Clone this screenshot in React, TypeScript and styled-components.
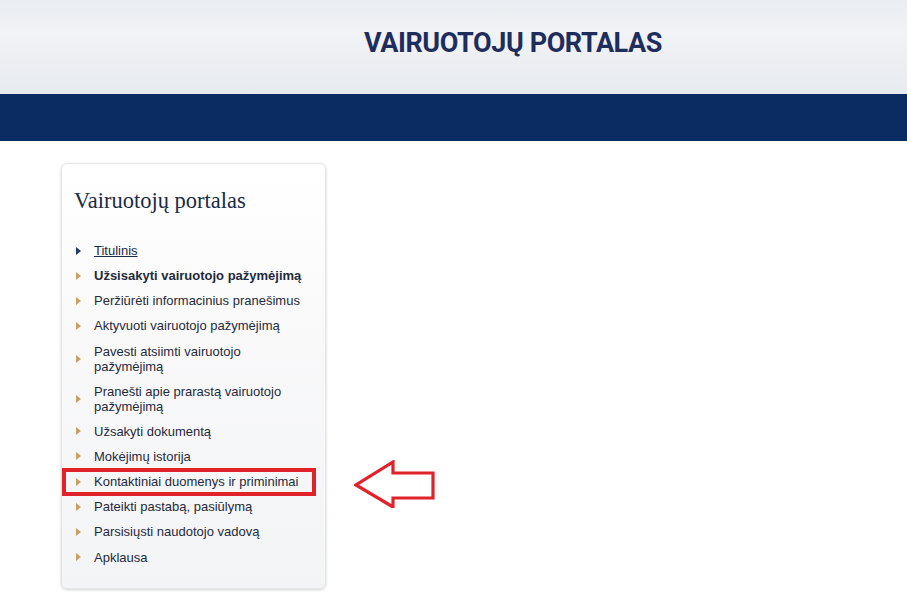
import React from "react";
import styled, { createGlobalStyle } from "styled-components";

const Global = createGlobalStyle`
  html, body { margin: 0; padding: 0; background: #ffffff; }
  body { font-family: Arial, "Liberation Sans", sans-serif; }
`;

const Page = styled.div`
  width: 907px;
  min-height: 605px;
  background: #ffffff;
`;

const TopBar = styled.header`
  height: 94px;
  background: linear-gradient(#e9ecf0 0%, #f1f3f6 35%, #e7eaee 100%);
  display: flex;
  justify-content: center;
  padding-top: 27px;
  box-sizing: border-box;
  padding-left: 119px;
`;

const SiteTitle = styled.h1`
  margin: 0;
  font-family: Roboto, "DejaVu Sans", sans-serif;
  font-weight: 700;
  font-size: 27px;
  line-height: 32px;
  color: #1f2d5c;
  letter-spacing: -0.4px;
`;

const Band = styled.div`
  height: 47px;
  background: #0b2b63;
`;

const Content = styled.main`
  display: flex;
  align-items: flex-start;
  padding: 22px 0 0 61px;
`;

const Card = styled.nav`
  width: 265px;
  box-sizing: border-box;
  height: 426px;
  border: 1px solid #e4e6e9;
  border-radius: 6px;
  background: linear-gradient(#ffffff 0%, #f9f9fa 40%, #f3f4f6 100%);
  box-shadow: 0 1px 3px rgba(0, 0, 0, 0.18);
  padding: 24px 10px 0 12px;
`;

const CardTitle = styled.h2`
  margin: 0 0 29px 0;
  font-family: "Liberation Serif", "Times New Roman", serif;
  font-weight: 400;
  font-size: 22.5px;
  line-height: 26px;
  color: #1c2a44;
`;

const List = styled.ul`
  list-style: none;
  margin: 0;
  padding: 0;
  display: flex;
  flex-direction: column;
  gap: 10.15px;
`;

const Item = styled.li<{ $boxed?: boolean }>`
  position: relative;
  display: flex;
  align-items: center;
  min-height: 15px;
  ${(p) =>
    p.$boxed
      ? `
    &::after {
      content: "";
      position: absolute;
      left: -12px;
      right: -1px;
      top: -6px;
      bottom: -7px;
      border: 4px solid #e0222b;
      pointer-events: none;
    }
  `
      : ""}
`;

const Bullet = styled.span<{ $dark?: boolean }>`
  flex: 0 0 auto;
  width: 0;
  height: 0;
  margin: 0 13px 0 2px;
  border-top: 4px solid transparent;
  border-bottom: 4px solid transparent;
  border-left: 5px solid ${(p) => (p.$dark ? "#1f3c66" : "#c9a062")};
`;

const ItemText = styled.a<{ $bold?: boolean; $link?: boolean; $wide?: boolean }>`
  font-family: Arial, "Liberation Sans", sans-serif;
  font-size: 13px;
  line-height: 15px;
  color: ${(p) => (p.$link ? "#1c2b47" : "#1f2a3c")};
  font-weight: ${(p) => (p.$bold ? 700 : 400)};
  text-decoration: ${(p) => (p.$link ? "underline" : "none")};
  max-width: ${(p) => (p.$wide ? "none" : "200px")};
  white-space: ${(p) => (p.$wide ? "nowrap" : "normal")};
`;

const ArrowWrap = styled.div`
  margin: 297px 0 0 28px;
  width: 82px;
  height: 48px;
`;

type Entry = { text: string; bold?: boolean; link?: boolean; boxed?: boolean; wrap?: boolean };

const entries: Entry[] = [
  { text: "Titulinis", link: true },
  { text: "Užsisakyti vairuotojo pažymėjimą", bold: true },
  { text: "Peržiūrėti informacinius pranešimus" },
  { text: "Aktyvuoti vairuotojo pažymėjimą" },
  { text: "Pavesti atsiimti vairuotojo pažymėjimą", wrap: true },
  { text: "Pranešti apie prarastą vairuotojo pažymėjimą", wrap: true },
  { text: "Užsakyti dokumentą" },
  { text: "Mokėjimų istorija" },
  { text: "Kontaktiniai duomenys ir priminimai", boxed: true },
  { text: "Pateikti pastabą, pasiūlymą" },
  { text: "Parsisiųsti naudotojo vadovą" },
  { text: "Apklausa" },
];

export default function App() {
  return (
    <Page>
      <Global />
      <TopBar>
        <SiteTitle>VAIRUOTOJŲ PORTALAS</SiteTitle>
      </TopBar>
      <Band />
      <Content>
        <Card>
          <CardTitle>Vairuotojų portalas</CardTitle>
          <List>
            {entries.map((e, i) => (
              <Item key={i} $boxed={e.boxed}>
                <Bullet $dark={i === 0} />
                <ItemText href="#" $bold={e.bold} $link={e.link} $wide={!e.wrap}>
                  {e.text}
                </ItemText>
              </Item>
            ))}
          </List>
        </Card>
        <ArrowWrap>
          <svg width="82" height="48" viewBox="0 0 82 48">
            <path
              d="M79 13 L39 13 L39 2 L2 25 L39 47 L39 38 L79 38 Z"
              fill="#ffffff"
              stroke="#e0222b"
              strokeWidth="3.2"
              strokeLinejoin="miter"
            />
          </svg>
        </ArrowWrap>
      </Content>
    </Page>
  );
}
